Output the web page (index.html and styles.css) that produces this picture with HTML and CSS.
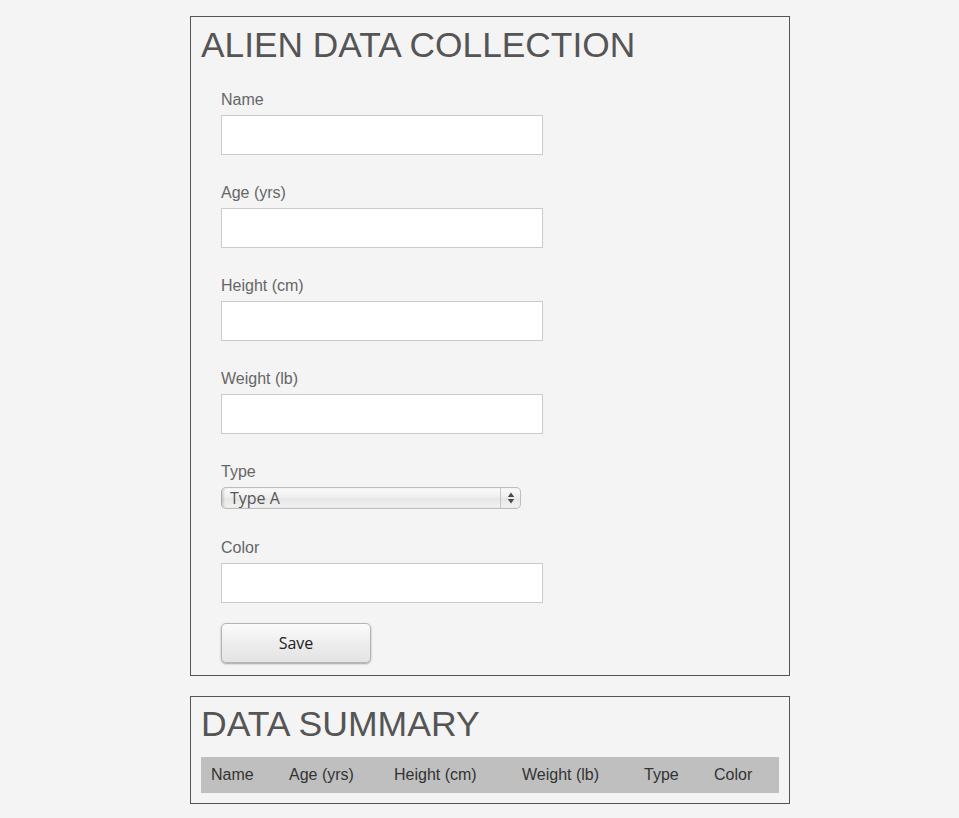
FILE: index.html
```html
<!DOCTYPE html>
<html lang="en">
<head>
<meta charset="utf-8">
<title>Alien Data Collection</title>
<link rel="stylesheet" href="styles.css">
</head>
<body>
<div class="page">
  <section class="box">
    <h1 class="box-title">ALIEN DATA COLLECTION</h1>
    <form class="form">
      <div class="field">
        <label class="label" for="name">Name</label>
        <input class="input" id="name" type="text">
      </div>
      <div class="field">
        <label class="label" for="age">Age (yrs)</label>
        <input class="input" id="age" type="text">
      </div>
      <div class="field">
        <label class="label" for="height">Height (cm)</label>
        <input class="input" id="height" type="text">
      </div>
      <div class="field">
        <label class="label" for="weight">Weight (lb)</label>
        <input class="input" id="weight" type="text">
      </div>
      <div class="field field-select">
        <label class="label" for="type">Type</label>
        <span class="select-wrap">
          <select class="select" id="type">
            <option>Type A</option>
            <option>Type B</option>
            <option>Type C</option>
          </select>
          <span class="select-arrows">
            <svg width="8" height="14" viewBox="0 0 8 14" aria-hidden="true">
              <path d="M4 1.5 L7.2 6 L0.8 6 Z" fill="#4a4a4a"/>
              <path d="M0.8 8 L7.2 8 L4 12.5 Z" fill="#4a4a4a"/>
            </svg>
          </span>
        </span>
      </div>
      <div class="field field-last">
        <label class="label" for="color">Color</label>
        <input class="input" id="color" type="text">
      </div>
      <button class="btn" type="button">Save</button>
    </form>
  </section>

  <section class="box box-summary">
    <h1 class="box-title box-title-summary">DATA SUMMARY</h1>
    <table class="table">
      <colgroup>
        <col class="c-name">
        <col class="c-age">
        <col class="c-height">
        <col class="c-weight">
        <col class="c-type">
        <col class="c-color">
      </colgroup>
      <thead>
        <tr>
          <th>Name</th>
          <th>Age (yrs)</th>
          <th>Height (cm)</th>
          <th>Weight (lb)</th>
          <th>Type</th>
          <th>Color</th>
        </tr>
      </thead>
    </table>
  </section>
</div>
</body>
</html>
```

FILE: styles.css
```css
html, body {
  margin: 0;
  padding: 0;
  background: #f4f4f4;
}

body {
  font-family: "Liberation Sans", Arial, sans-serif;
  padding-top: 16px;
}

.page {
  width: 600px;
  margin-left: 190px;
}

.box {
  box-sizing: border-box;
  width: 600px;
  border: 1px solid #555;
  background: #f4f4f4;
  padding: 7px 10px 12px;
}

.box-summary {
  margin-top: 20px;
  padding-bottom: 10px;
}

.box-title {
  margin: 0;
  font-size: 35.3px;
  line-height: 41px;
  font-weight: normal;
  color: #555;
}

.box-title-summary {
  font-size: 35.6px;
}

.form {
  margin: 26px 0 0;
  padding-left: 20px;
}

.field {
  margin-bottom: 29px;
}

.field-select {
  margin-bottom: 30px;
}

.field-last {
  margin-bottom: 0;
}

.label {
  display: block;
  font-size: 16px;
  line-height: 17px;
  color: #666;
  margin-bottom: 7px;
}

.input {
  display: block;
  box-sizing: border-box;
  width: 322px;
  height: 40px;
  margin: 0;
  border: 1px solid #cbcbcb;
  background: #fff;
  font-size: 15px;
  padding: 0 8px;
}

.select-wrap {
  position: relative;
  display: block;
  width: 300px;
  height: 22px;
  margin-top: 1px;
}

.select {
  appearance: none;
  -webkit-appearance: none;
  box-sizing: border-box;
  display: block;
  width: 300px;
  height: 22px;
  margin: 0;
  padding: 0 0 0 8px;
  border: 1px solid #bdbdbd;
  border-left-color: #a9a9a9;
  border-radius: 5px;
  background: linear-gradient(#fbfbfb 0%, #efefef 45%, #e6e6e6 55%, #f3f3f3 100%);
  box-shadow: inset 2px 0 2px rgba(0, 0, 0, 0.12);
  font-family: "Open Sans", sans-serif;
  font-size: 16px;
  line-height: 20px;
  color: #555;
}

.select-arrows {
  position: absolute;
  top: 1px;
  right: 1px;
  width: 19px;
  height: 20px;
  border-left: 1px solid #c6c6c6;
  display: flex;
  align-items: center;
  justify-content: center;
  pointer-events: none;
}

.btn {
  display: block;
  box-sizing: border-box;
  width: 150px;
  height: 40px;
  margin: 20px 0 0;
  border: 1px solid #b4b4b4;
  border-radius: 5px;
  background: linear-gradient(#fbfbfb, #ebebeb 60%, #e4e4e4);
  box-shadow: 0 1px 2px rgba(0, 0, 0, 0.35);
  font-family: "Open Sans", sans-serif;
  font-size: 16px;
  color: #222;
  padding: 0;
}

.table {
  margin-top: 12px;
  width: 578px;
  table-layout: fixed;
  border-collapse: collapse;
  background: #bfbfbf;
}

.c-name { width: 78px; }
.c-age { width: 105px; }
.c-height { width: 128px; }
.c-weight { width: 122px; }
.c-type { width: 70px; }
.c-color { width: 75px; }

.table th {
  text-align: left;
  font-weight: normal;
  font-size: 16px;
  line-height: 18px;
  color: #333;
  padding: 9px 10px;
  white-space: nowrap;
}
```
